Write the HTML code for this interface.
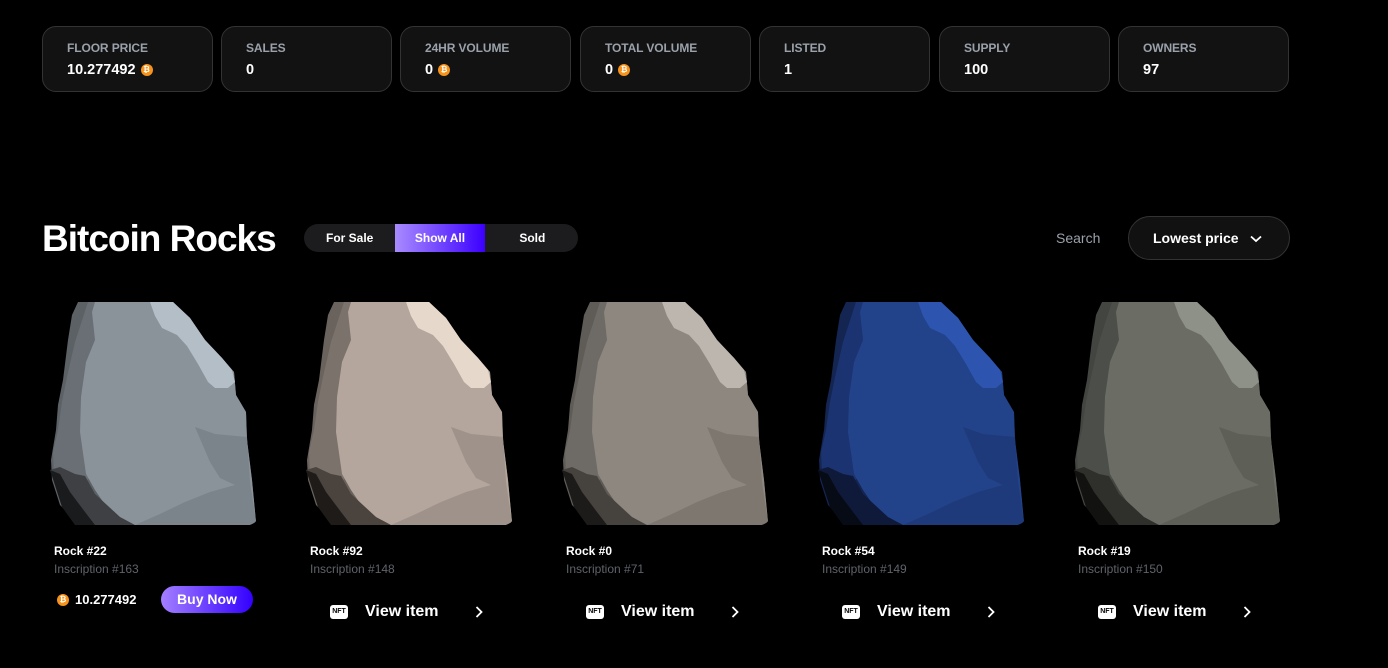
<!DOCTYPE html>
<html><head><meta charset="utf-8"><style>
*{margin:0;padding:0;box-sizing:border-box}
body{width:1388px;height:668px;background:#000;font-family:"Liberation Sans",sans-serif;color:#fff;position:relative;overflow:hidden}
.stat{position:absolute;top:26px;width:171px;height:66px;background:#121212;border:1px solid #333;border-radius:14px;padding:14px 0 0 24px}
.stat .l{font-size:12px;color:#9aa1aa;font-weight:bold;letter-spacing:-.1px}
.stat .v{font-size:14.5px;font-weight:bold;margin-top:7px;display:flex;align-items:center}
.coin{display:inline-block;width:12px;height:12px;border-radius:50%;background:#f7931a;color:#fff;font-size:8px;line-height:12px;text-align:center;font-weight:bold;margin-left:5px}
h1{position:absolute;left:42px;top:218px;font-size:37px;font-weight:bold;letter-spacing:-1px}
.tog{position:absolute;left:304px;top:224px;width:274px;height:28px;background:#1c1c1e;border-radius:14px;display:flex;font-size:12px;font-weight:bold}
.tog div{line-height:28px;text-align:center}
.card{position:absolute;top:302px;width:208px}
.card svg{display:block}
.nm{position:absolute;top:242px;left:4px;font-size:12px;font-weight:bold}
.ins{position:absolute;top:260px;left:4px;font-size:12px;color:#5f636a}
.vi{position:absolute;top:301px;left:24px;display:flex;align-items:center;font-size:16px;font-weight:bold}
.nft{width:18px;height:14px;background:#fff;color:#000;border-radius:3px;font-size:7px;font-weight:bold;text-align:center;line-height:14px;margin-right:17px}
.ch{margin-left:36px}
</style></head><body>
<div class="stat" style="left:42px"><div class="l">FLOOR PRICE</div><div class="v">10.277492<span class="coin">₿</span></div></div>
<div class="stat" style="left:221px"><div class="l">SALES</div><div class="v">0</div></div>
<div class="stat" style="left:400px"><div class="l">24HR VOLUME</div><div class="v">0<span class="coin">₿</span></div></div>
<div class="stat" style="left:580px"><div class="l">TOTAL VOLUME</div><div class="v">0<span class="coin">₿</span></div></div>
<div class="stat" style="left:759px"><div class="l">LISTED</div><div class="v">1</div></div>
<div class="stat" style="left:939px"><div class="l">SUPPLY</div><div class="v">100</div></div>
<div class="stat" style="left:1118px"><div class="l">OWNERS</div><div class="v">97</div></div>
<h1>Bitcoin Rocks</h1>
<div class="tog"><div style="width:92px">For Sale</div><div style="width:90px;background:linear-gradient(90deg,#a98bff,#3b00ff)">Show All</div><div style="width:92px;margin-left:2px">Sold</div></div>
<div style="position:absolute;left:1056px;top:230px;font-size:14px;color:#9aa1aa">Search</div>
<div style="position:absolute;left:1128px;top:216px;width:162px;height:44px;border:1px solid #333;border-radius:22px;background:#111;font-size:14px;font-weight:bold;padding:13px 0 0 24px">Lowest price<svg width="12" height="8" style="margin-left:11px" viewBox="0 0 12 8"><path d="M1 1.5l5 4.5 5-4.5" stroke="#fff" stroke-width="1.8" fill="none"/></svg></div>

<svg width="0" height="0" style="position:absolute"><defs>
<clipPath id="cp"><rect x="0" y="0" width="208" height="223" rx="10"/></clipPath>
<g id="rock" clip-path="url(#cp)">
<path style="fill:var(--d1)" d="M28,0 L123,0 L140,16 L155,38 L172,56 L184,70 L186,93 L196,110 L197,138 L202,178 L206,220 L200,223 L30,223 L10,203 L2,178 L1,158 L6,128 L8,103 L13,78 L18,38 L22,13 Z"/>
<path style="fill:var(--d2)" d="M38,0 L60,0 L58,30 L45,60 L38,100 L40,140 L44,175 L20,185 L4,172 L3,150 L8,128 L12,100 L17,75 L25,40 Z"/>
<path style="fill:var(--m)" d="M45,0 L123,0 L140,16 L155,38 L172,56 L184,70 L186,93 L196,110 L197,138 L202,178 L206,220 L200,223 L80,223 L60,210 L45,188 L36,172 L30,130 L31,95 L36,60 L45,38 L42,10 Z"/>
<path style="fill:var(--l)" d="M100,0 L123,0 L140,16 L155,38 L172,56 L182,68 L185,80 L178,86 L165,86 L158,80 L148,62 L137,44 L127,33 L112,26 L105,14 Z"/>
<path style="fill:var(--r)" d="M145,125 L165,132 L197,135 L200,180 L206,220 L200,223 L85,223 L110,212 L135,200 L160,190 L185,183 L170,176 L160,160 Z"/>
<path style="fill:var(--d3)" d="M0,168 L10,165 L25,172 L35,174 L45,192 L70,215 L85,223 L30,223 L12,205 L4,180 Z"/>
<path style="fill:var(--d4)" d="M0,168 L10,172 L20,190 L35,210 L45,223 L25,223 L12,205 L4,180 Z"/>
</g></defs></svg>

<div class="card" style="left:50px">
<svg width="208" height="223" style="--d1:#5c6166;--d2:#6a6f75;--m:#8a929a;--l:#b4bec6;--r:#7b838b;--d3:#3e4044;--d4:#1a1b1d"><use href="#rock"/></svg>
<div class="nm">Rock #22</div><div class="ins">Inscription #163</div>
<div style="position:absolute;top:290px;left:7px;display:flex;align-items:center;font-size:13px;font-weight:bold"><span class="coin" style="margin:0 6px 0 0">₿</span>10.277492</div>
<div style="position:absolute;top:284px;left:111px;width:92px;height:27px;border-radius:14px;background:linear-gradient(90deg,#a37fff,#3300ff);font-size:14px;font-weight:bold;text-align:center;line-height:27px">Buy Now</div>
</div>
<div class="card" style="left:306px">
<svg width="208" height="223" style="--d1:#6a635d;--d2:#7a726b;--m:#b4a69c;--l:#e6d8cb;--r:#9e928a;--d3:#4a433e;--d4:#1e1b19"><use href="#rock"/></svg>
<div class="nm">Rock #92</div><div class="ins">Inscription #148</div>
<div class="vi"><div class="nft">NFT</div>View item<svg class="ch" width="8" height="12" viewBox="0 0 8 12"><path d="M1.5 1l5 5-5 5" stroke="#fff" stroke-width="1.8" fill="none"/></svg></div>
</div>
<div class="card" style="left:562px">
<svg width="208" height="223" style="--d1:#5f5b57;--d2:#6e6a65;--m:#8e8780;--l:#bdb6ae;--r:#7d7770;--d3:#46423e;--d4:#1d1b19"><use href="#rock"/></svg>
<div class="nm">Rock #0</div><div class="ins">Inscription #71</div>
<div class="vi"><div class="nft">NFT</div>View item<svg class="ch" width="8" height="12" viewBox="0 0 8 12"><path d="M1.5 1l5 5-5 5" stroke="#fff" stroke-width="1.8" fill="none"/></svg></div>
</div>
<div class="card" style="left:818px">
<svg width="208" height="223" style="--d1:#142552;--d2:#1b3370;--m:#22438a;--l:#2d55b0;--r:#1f3a7a;--d3:#0f1a3a;--d4:#070b16"><use href="#rock"/></svg>
<div class="nm">Rock #54</div><div class="ins">Inscription #149</div>
<div class="vi"><div class="nft">NFT</div>View item<svg class="ch" width="8" height="12" viewBox="0 0 8 12"><path d="M1.5 1l5 5-5 5" stroke="#fff" stroke-width="1.8" fill="none"/></svg></div>
</div>
<div class="card" style="left:1074px">
<svg width="208" height="223" style="--d1:#434540;--d2:#4c4f49;--m:#6b6d65;--l:#8e9187;--r:#5e6058;--d3:#2f302c;--d4:#121311"><use href="#rock"/></svg>
<div class="nm">Rock #19</div><div class="ins">Inscription #150</div>
<div class="vi"><div class="nft">NFT</div>View item<svg class="ch" width="8" height="12" viewBox="0 0 8 12"><path d="M1.5 1l5 5-5 5" stroke="#fff" stroke-width="1.8" fill="none"/></svg></div>
</div>
</body></html>
